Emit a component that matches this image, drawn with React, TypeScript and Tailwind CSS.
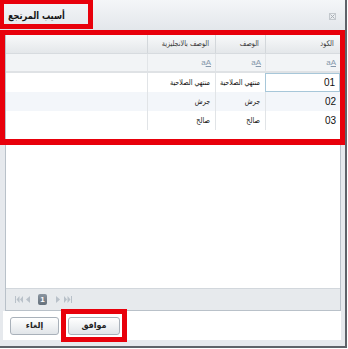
import React from "react";

const rows = [
  { code: "01", desc: "منتهي الصلاحية", en: "منتهي الصلاحية" },
  { code: "02", desc: "جرش", en: "جرش" },
  { code: "03", desc: "صالح", en: "صالح" },
];

function FilterIcon() {
  return (
    <span className="font-['Liberation_Sans',sans-serif] text-[8px] leading-none text-[#8598ab]">
      a<span className="underline">A</span>
    </span>
  );
}

function Tri({ dir, double }: { dir: "l" | "r"; double?: boolean }) {
  return (
    <svg width={double ? 8 : 6} height="7" viewBox={double ? "0 0 8 7" : "0 0 6 7"} className="shrink-0">
      {dir === "l" ? (
        double ? (
          <g fill="#b9c1c9">
            <rect x="0" y="0" width="1" height="7" />
            <path d="M4.5 0 L1.5 3.5 L4.5 7Z" />
            <path d="M8 0 L5 3.5 L8 7Z" />
          </g>
        ) : (
          <path d="M5 0 L1 3.5 L5 7Z" fill="#b9c1c9" />
        )
      ) : double ? (
        <g fill="#b9c1c9">
          <rect x="7" y="0" width="1" height="7" />
          <path d="M3.5 0 L6.5 3.5 L3.5 7Z" />
          <path d="M0 0 L3 3.5 L0 7Z" />
        </g>
      ) : (
        <path d="M1 0 L5 3.5 L1 7Z" fill="#b9c1c9" />
      )}
    </svg>
  );
}

export default function App() {
  const ar = "font-['DejaVu_Sans',sans-serif]";
  const sq = "inline-block whitespace-nowrap scale-x-[0.8] origin-right";
  return (
    <div className="relative w-[347px] h-[348px] flex flex-col bg-[#e6e9ed] border-r-2 border-b-2 border-[#5e6369] overflow-hidden">
      {/* title bar */}
      <div className="h-[30px] shrink-0 flex items-center justify-between bg-gradient-to-b from-[#f4f6f8] to-[#e3e7eb] pl-[8px] pr-[9px]">
        <span dir="rtl" className={`${ar} inline-block whitespace-nowrap scale-x-[0.82] origin-left text-[10px] font-bold text-[#151515]`}>
          أسيب المرتجع
        </span>
        <svg width="7" height="7" viewBox="0 0 7 7" className="mt-[2px]">
          <rect x="0.5" y="0.5" width="6" height="6" fill="none" stroke="#c3c8cd" strokeWidth="1" />
          <path d="M1.5 1.5 L5.5 5.5 M5.5 1.5 L1.5 5.5" stroke="#a9afb5" strokeWidth="1" />
        </svg>
      </div>

      {/* grid panel */}
      <div className="mt-[4px] ml-[5px] w-[336px] h-[277px] shrink-0 flex flex-col border border-[#b9c1c9] bg-white">
        {/* header */}
        <div dir="rtl" className={`flex h-[19px] shrink-0 bg-gradient-to-b from-[#f8f9fa] to-[#e4e7ea] border-b border-[#d7dbdf] ${ar} text-[8px] text-[#3a3a3a]`}>
          <div className="w-[75px] border-l border-[#d3d7db] flex items-center pr-[6px]"><span className={sq}>الكود</span></div>
          <div className="w-[50px] border-l border-[#d3d7db] flex items-center pr-[6px]"><span className={sq}>الوصف</span></div>
          <div className="w-[68px] border-l border-[#d3d7db] flex items-center pr-[6px] overflow-hidden"><span className={sq}>الوصف بالانجليزية</span></div>
          <div className="flex-1" />
        </div>
        {/* filter row */}
        <div dir="rtl" className="flex h-[19px] shrink-0 bg-[#f2f4f6] border-b-2 border-[#dfe2e5]">
          <div className="w-[75px] border-l border-[#e2e5e8] flex items-center pr-[4px]"><FilterIcon /></div>
          <div className="w-[50px] border-l border-[#e2e5e8] flex items-center pr-[4px]"><FilterIcon /></div>
          <div className="w-[68px] border-l border-[#e2e5e8] flex items-center pr-[4px]"><FilterIcon /></div>
          <div className="flex-1" />
        </div>
        {/* rows */}
        {rows.map((r, i) => (
          <div key={r.code} dir="rtl" className={`flex h-[19px] shrink-0 ${i === 1 ? "bg-[#f3f6fa]" : "bg-white"}`}>
            <div className={`w-[75px] border-l flex items-center pr-[4px] font-['Liberation_Sans',sans-serif] text-[10px] text-[#111] ${i === 0 ? "border border-[#a7c7d9] bg-white" : "border-[#e1e4e7]"}`}>
              {r.code}
            </div>
            <div className={`w-[50px] border-l border-[#e1e4e7] flex items-center pr-[5px] ${ar} text-[8px] text-[#111] overflow-hidden`}><span className={sq}>{r.desc}</span></div>
            <div className={`w-[68px] border-l border-[#e1e4e7] flex items-center pr-[5px] ${ar} text-[8px] text-[#111] overflow-hidden`}><span className={sq}>{r.en}</span></div>
            <div className="flex-1" />
          </div>
        ))}
        <div className="flex-1" />
        {/* paging toolbar */}
        <div className="h-[22px] shrink-0 bg-[#e7eaed] border-t border-[#d2d7dc] flex items-center pl-[9px]">
          <Tri dir="l" double />
          <span className="ml-[2px]"><Tri dir="l" /></span>
          <div className="ml-[7px] w-[9px] h-[11px] rounded-[2px] bg-gradient-to-b from-[#8a95a0] to-[#65707b] flex items-center justify-center font-['Liberation_Sans',sans-serif] text-[8px] font-bold text-white">1</div>
          <span className="ml-[8px]"><Tri dir="r" /></span>
          <span className="ml-[3px]"><Tri dir="r" double /></span>
        </div>
      </div>

      {/* button row */}
      <div className="ml-[3px] w-[338px] h-[29px] shrink-0 bg-white flex items-start pt-[6px] pl-[7px] gap-[9px]">
        <button className={`w-[49px] h-[18px] rounded-[3px] border border-[#a9b1ba] bg-gradient-to-b from-[#ffffff] to-[#e1e5e9] ${ar} text-[8px] font-bold text-[#222] flex items-center justify-center`}>إلغاء</button>
        <button className={`w-[52px] h-[18px] rounded-[3px] border border-[#a9b1ba] bg-gradient-to-b from-[#ffffff] to-[#e1e5e9] ${ar} text-[8px] font-bold text-[#222] flex items-center justify-center`}>موافق</button>
      </div>

      {/* red annotation boxes */}
      <div className="absolute left-0 top-0 w-[93px] h-[29px] border-t-4 border-l-4 border-r-[5px] border-b-[5px] border-[#e8000b]" />
      <div className="absolute left-0 top-[30px] w-[346px] h-[115px] border-t-[5px] border-l-[5px] border-r-[6px] border-b-[6px] border-[#e8000b]" />
      <div className="absolute left-[61px] top-[309px] w-[66px] h-[33px] border-[5px] border-[#e8000b]" />
    </div>
  );
}
